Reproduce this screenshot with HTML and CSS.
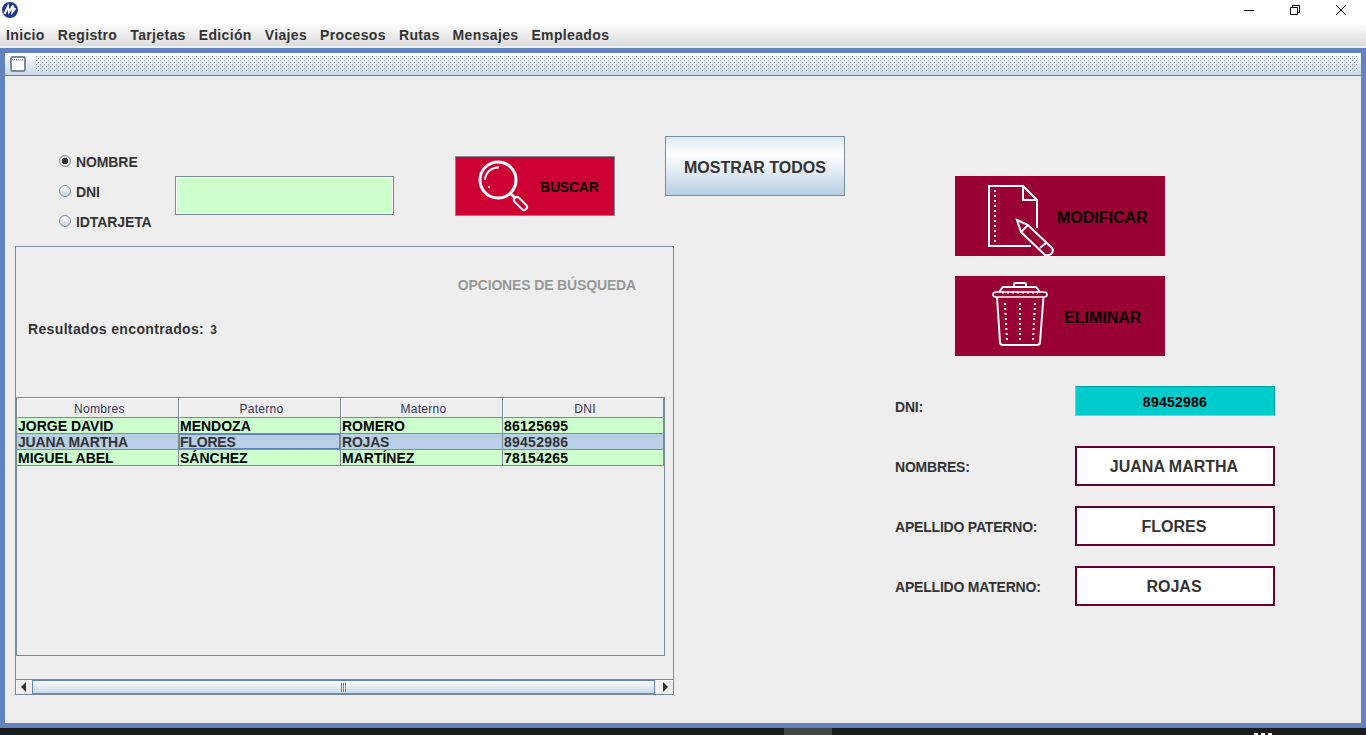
FILE: index.html
```html
<!DOCTYPE html>
<html lang="es">
<head>
    <meta charset="UTF-8">
    <title>Consulta de clientes</title>
    <link rel="stylesheet" href="styles.css">
</head>
<body>
<div class="titlebar">
    <svg class="logo" width="16" height="16" viewBox="0 0 16 16">
        <circle cx="8" cy="8" r="8" fill="#1c3a8e"/>
        <path d="M2.5 12 L6 4.5 L7 10 L11 3.5 L10.5 10 L13.5 6" fill="none" stroke="#fff" stroke-width="2"/>
    </svg>
    <div class="win_btns">
        <svg width="12" height="12" viewBox="0 0 12 12"><path d="M1 6.5H11" stroke="#000" stroke-width="1"/></svg>
        <svg width="12" height="12" viewBox="0 0 12 12"><path d="M1.5 3.5H8.5V10.5H1.5Z M3.5 3.5V1.5H10.5V8.5H8.5" fill="none" stroke="#000" stroke-width="1"/></svg>
        <svg width="12" height="12" viewBox="0 0 12 12"><path d="M1 1L11 11M11 1L1 11" stroke="#000" stroke-width="1"/></svg>
    </div>
</div>
<ul class="menubar">
    <li>Inicio</li>
    <li>Registro</li>
    <li>Tarjetas</li>
    <li>Edición</li>
    <li>Viajes</li>
    <li>Procesos</li>
    <li>Rutas</li>
    <li>Mensajes</li>
    <li>Empleados</li>
</ul>
<div class="frame">
    <div class="frame_title">
        <svg class="frame_icon" width="16" height="16" viewBox="0 0 16 16">
            <rect x="1" y="1" width="14" height="14" rx="2" fill="#fff" stroke="#7a8a99" stroke-width="2"/>
            <path d="M2 3.500H14" stroke="#7a8a99" stroke-width="1" stroke-dasharray="1 1"/>
            <path d="M2 4.500H14" stroke="#c8d8ea" stroke-width="1"/>
        </svg>
        <svg class="frame_dots" height="16">
            <defs>
                <pattern id="bumps" width="4" height="4" patternUnits="userSpaceOnUse">
                    <rect x="0" y="0" width="1" height="1" fill="#7a8a99"/>
                    <rect x="2" y="2" width="1" height="1" fill="#7a8a99"/>
                    <rect x="1" y="1" width="1" height="1" fill="#ffffff"/>
                    <rect x="3" y="3" width="1" height="1" fill="#ffffff"/>
                </pattern>
            </defs>
            <rect width="100%" height="16" fill="url(#bumps)" shape-rendering="crispEdges"/>
        </svg>
    </div>
    <div class="frame_body">
        <div class="col_left">
            <div class="search">
                <div class="radios">
                    <label class="radio"><span class="dot dot_on"></span>NOMBRE</label>
                    <label class="radio"><span class="dot"></span>DNI</label>
                    <label class="radio"><span class="dot"></span>IDTARJETA</label>
                </div>
                <div class="search_input"></div>
                <div class="btn_buscar">
                    <svg width="84" height="58" viewBox="0 0 84 58" fill="none" stroke="#fff">
                        <circle cx="42" cy="23" r="18" stroke-width="3"/>
                        <path d="M29 23 A13 13 0 0 1 43 10.5" stroke-width="2"/>
                        <circle cx="33" cy="30" r="1" fill="#fff" stroke="none"/>
                        <path d="M54 36 L59 41" stroke-width="2.5"/>
                        <path d="M61 43 L68 50" stroke-width="8" stroke-linecap="round"/>
                        <path d="M61 43 L68 50" stroke="#cc0033" stroke-width="4" stroke-linecap="round"/>
                    </svg>
                    <span>BUSCAR</span>
                </div>
                <div class="btn_todos">MOSTRAR TODOS</div>
            </div>
            <div class="panel">
                <div class="panel_title">OPCIONES DE BÚSQUEDA</div>
                <div class="results">Resultados encontrados: <span class="count">3</span></div>
                <div class="table_box">
                    <table>
                        <thead>
                            <tr><th>Nombres</th><th>Paterno</th><th>Materno</th><th>DNI</th></tr>
                        </thead>
                        <tbody>
                            <tr><td>JORGE DAVID</td><td>MENDOZA</td><td>ROMERO</td><td class="num">86125695</td></tr>
                            <tr class="selected"><td>JUANA MARTHA</td><td class="focus">FLORES</td><td>ROJAS</td><td class="num">89452986</td></tr>
                            <tr><td>MIGUEL ABEL</td><td>SÁNCHEZ</td><td>MARTÍNEZ</td><td class="num">78154265</td></tr>
                        </tbody>
                    </table>
                </div>
                <div class="scrollbar">
                    <span class="arrow"><svg width="6" height="10" viewBox="0 0 6 10"><path d="M5 0V10L0 5Z" fill="#333"/></svg></span>
                    <span class="track"><span class="grip"></span></span>
                    <span class="arrow"><svg width="6" height="10" viewBox="0 0 6 10"><path d="M1 0V10L6 5Z" fill="#333"/></svg></span>
                </div>
            </div>
        </div>
        <div class="col_right">
            <div class="action">
                <svg width="102" height="80" viewBox="0 0 102 80" fill="none" stroke="#fff" stroke-width="2">
                    <path d="M82 52V24L68 10H34V70H76"/>
                    <path d="M68 10V24H82"/>
                    <path d="M40 14V68" stroke-dasharray="2 3"/>
                    <path d="M62 44L73 49L97 72Q99 75 96 78Q93 80 90 79L66 56Z"/>
                    <path d="M66.5 55.5L73 49M85 72L91.5 66.5"/>
                </svg>
                <span>MODIFICAR</span>
            </div>
            <div class="action action_del">
                <svg width="109" height="80" viewBox="0 0 109 80" fill="none" stroke="#fff" stroke-width="2">
                    <path d="M59 10V8Q59 7 61 7H69Q71 7 71 8V10"/>
                    <path d="M44 16L48 11H81L85 16"/>
                    <path d="M41 16H89Q92 16 92 18.500Q92 21 89 21H41Q38 21 38 18.500Q38 16 41 16Z" stroke-width="1.600"/>
                    <path d="M47 16.500H83" stroke-dasharray="2 3"/>
                    <path d="M42 21L45 66Q45 69 48 69H82Q85 69 85 66L88.500 21"/>
                    <path d="M50 27L52 65M65 27V65M80 27L78 65" stroke-dasharray="2 3"/>
                </svg>
                <span>ELIMINAR</span>
            </div>
            <div class="form">
                <div class="form_row form_row_dni">
                    <span class="form_label">DNI:</span>
                    <div class="field_dni">89452986</div>
                </div>
                <div class="form_row">
                    <span class="form_label">NOMBRES:</span>
                    <div class="field">JUANA MARTHA</div>
                </div>
                <div class="form_row">
                    <span class="form_label">APELLIDO PATERNO:</span>
                    <div class="field">FLORES</div>
                </div>
                <div class="form_row">
                    <span class="form_label">APELLIDO MATERNO:</span>
                    <div class="field">ROJAS</div>
                </div>
            </div>
        </div>
    </div>
</div>
<div class="taskbar">
    <span class="task_active"></span>
    <span class="clock_top"><i></i><i></i><i></i></span>
</div>
</body>
</html>
```
FILE: styles.css
```css
*{
    margin: 0;
    padding: 0;
    box-sizing: border-box;
    list-style: none;
}
body{
    width: 1366px;
    height: 735px;
    overflow: hidden;
    background-color: #ffffff;
    font-family: "Liberation Sans", Arial, sans-serif;
    font-weight: bold;
    color: #333333;
}

/* ventana */
.titlebar{
    height: 22px;
    display: flex;
    align-items: flex-start;
    background-color: #ffffff;
}
.logo{
    margin: 2px 0 0 2px;
}
.win_btns{
    margin-left: auto;
    display: flex;
    gap: 34px;
    padding: 4px 19px 0 0;
}
.menubar{
    height: 26px;
    display: flex;
    gap: 13px;
    padding: 5px 0 0 6px;
    font-size: 14px;
    line-height: 16px;
    letter-spacing: 0.35px;
    background: linear-gradient(#ffffff, #dcdcdc 92%, #f0f0f0 92%);
}

/* internal frame */
.frame{
    height: 680px;
    border: 5px solid #6382bf;
    background-color: #eeeeee;
}
.frame_title{
    height: 23px;
    display: flex;
    align-items: center;
    gap: 10px;
    padding: 0 4px 1px 5px;
    background: linear-gradient(#ffffff, #c8d8ea);
    border-bottom: 1px solid #6382bf;
}
.frame_icon{
    flex: none;
}
.frame_dots{
    flex: 1;
    min-width: 0;
}
.frame_body{
    height: 647px;
    display: flex;
    padding: 60px 0 0 10px;
}
.col_left{
    width: 830px;
}
.col_right{
    width: 380px;
    margin-left: 50px;
    padding-top: 40px;
}

/* busqueda */
.search{
    height: 110px;
    display: flex;
    align-items: flex-start;
}
.radios{
    width: 160px;
    padding: 11px 0 0 44px;
}
.radio{
    height: 30px;
    display: flex;
    align-items: center;
    gap: 5px;
    font-size: 14px;
    letter-spacing: -0.1px;
}
.dot{
    width: 12px;
    height: 12px;
    margin-bottom: 2px;
    border: 1px solid #7a8a99;
    border-radius: 50%;
    background: linear-gradient(#ffffff, #c0d2e6);
}
.dot_on{
    background: radial-gradient(#333333 3px, #e4e4e4 3.5px);
}
.search_input{
    width: 219px;
    height: 39px;
    margin-top: 40px;
    background-color: #ccffcc;
    border: 1px solid #7a8a99;
    box-shadow: inset 0 0 0 1px #ffffff;
}
.btn_buscar{
    width: 160px;
    height: 60px;
    margin: 20px 0 0 61px;
    display: flex;
    align-items: center;
    background-color: #cc0033;
    border: 1px solid #7a8a99;
    color: #000000;
    font-size: 14px;
    letter-spacing: -0.2px;
}
.btn_buscar span{
    padding-top: 2px;
}
.btn_todos{
    width: 180px;
    height: 60px;
    margin-left: 50px;
    padding-top: 4px;
    display: flex;
    align-items: center;
    justify-content: center;
    border: 1px solid #7a8a99;
    background: linear-gradient(#dde8f3, #ffffff 30%, #b8cfe5);
    font-size: 16px;
}

/* panel con la tabla */
.panel{
    width: 659px;
    height: 449px;
    padding-top: 31px;
    border: 1px solid #7a8a99;
    border-bottom: none;
}
.panel_title{
    height: 14px;
    padding-right: 37px;
    text-align: right;
    font-size: 14px;
    line-height: 14px;
    letter-spacing: -0.15px;
    color: #999999;
}
.results{
    height: 14px;
    margin: 30px 0 0 12px;
    font-size: 14px;
    line-height: 14px;
    letter-spacing: 0.35px;
}
.count{
    font-size: 12px;
    margin-left: 2px;
}
.table_box{
    width: 649px;
    height: 259px;
    margin-top: 61px;
    border: 1px solid #7a8a99;
}
table{
    width: 647px;
    table-layout: fixed;
    border-collapse: separate;
    border-spacing: 0;
}
th{
    width: 162px;
    height: 20px;
    font-size: 12px;
    font-weight: normal;
    letter-spacing: 0.3px;
    color: #333355;
    background-color: #eeeeee;
    border-right: 1px solid #7a8a99;
    border-bottom: 1px solid #7a8a99;
    border-left: 1px solid #ffffff;
    border-top: 1px solid #ffffff;
    padding: 2px 0 0 3px;
}
th:last-child{
    width: 161px;
}
td{
    height: 16px;
    padding: 1px 0 0 1px;
    font-size: 14px;
    line-height: 14px;
    color: #000000;
    background-color: #ccffcc;
    border-right: 1px solid #7a8a99;
    border-bottom: 1px solid #7a8a99;
    overflow: hidden;
    white-space: nowrap;
}
.selected td{
    background-color: #b8cfe5;
    color: #333333;
    letter-spacing: -0.2px;
}
.selected .focus{
    box-shadow: inset 0 0 0 1px #6382bf;
}
td.num,
.selected td.num{
    letter-spacing: 0.25px;
}

.scrollbar{
    width: 657px;
    height: 16px;
    margin-top: 23px;
    display: flex;
    border-top: 1px solid #7a8a99;
    border-bottom: 1px solid #7a8a99;
}
.arrow{
    width: 16px;
    display: flex;
    align-items: center;
    justify-content: center;
    background-color: #eeeeee;
    box-shadow: inset 1px 1px 0 #ffffff;
}
.track{
    flex: 1;
    margin-right: 2px;
    display: flex;
    align-items: center;
    justify-content: center;
    background: linear-gradient(#ffffff, #c8d8ea);
    border: 1px solid #6382bf;
    border-bottom-color: #7a8a99;
}
.grip{
    width: 6px;
    height: 9px;
    background: repeating-linear-gradient(90deg, #6382bf 0 1px, #ffffff 1px 2px);
}

/* columna derecha */
.action{
    width: 210px;
    height: 80px;
    margin: 0 0 20px 60px;
    display: flex;
    align-items: center;
    background-color: #990033;
    color: #000000;
    font-size: 16px;
}
.action span{
    padding-top: 4px;
}
.form{
    padding-top: 10px;
}
.form_row{
    width: 380px;
    height: 40px;
    margin-bottom: 20px;
    display: flex;
    align-items: center;
    justify-content: space-between;
}
.form_row_dni{
    height: 30px;
    margin-bottom: 30px;
    align-items: flex-start;
}
.form_row_dni .form_label{
    margin-top: 11px;
}
.form_label{
    padding-top: 2px;
    font-size: 14px;
    letter-spacing: -0.2px;
}
.field{
    width: 200px;
    height: 40px;
    padding: 2px 2px 0 0;
    display: flex;
    align-items: center;
    justify-content: center;
    background-color: #ffffff;
    border: 2px solid #660033;
    font-size: 16px;
}
.field_dni{
    width: 200px;
    height: 30px;
    padding-top: 2px;
    display: flex;
    align-items: center;
    justify-content: center;
    background-color: #00cccc;
    border: 1px solid;
    border-color: #00a0a0 #00a0a0 #00ffff #00ffff;
    color: #000000;
    font-size: 14px;
    letter-spacing: 0.25px;
}

/* barra de tareas cortada */
.taskbar{
    height: 7px;
    display: flex;
    align-items: flex-end;
    background-color: #1a1a1f;
}
.task_active{
    width: 48px;
    height: 7px;
    margin-left: 784px;
    background-color: #444444;
}
.clock_top{
    display: flex;
    gap: 3px;
    margin-left: 422px;
}
.clock_top i{
    width: 4px;
    height: 2px;
    background-color: #ffffff;
}
```
